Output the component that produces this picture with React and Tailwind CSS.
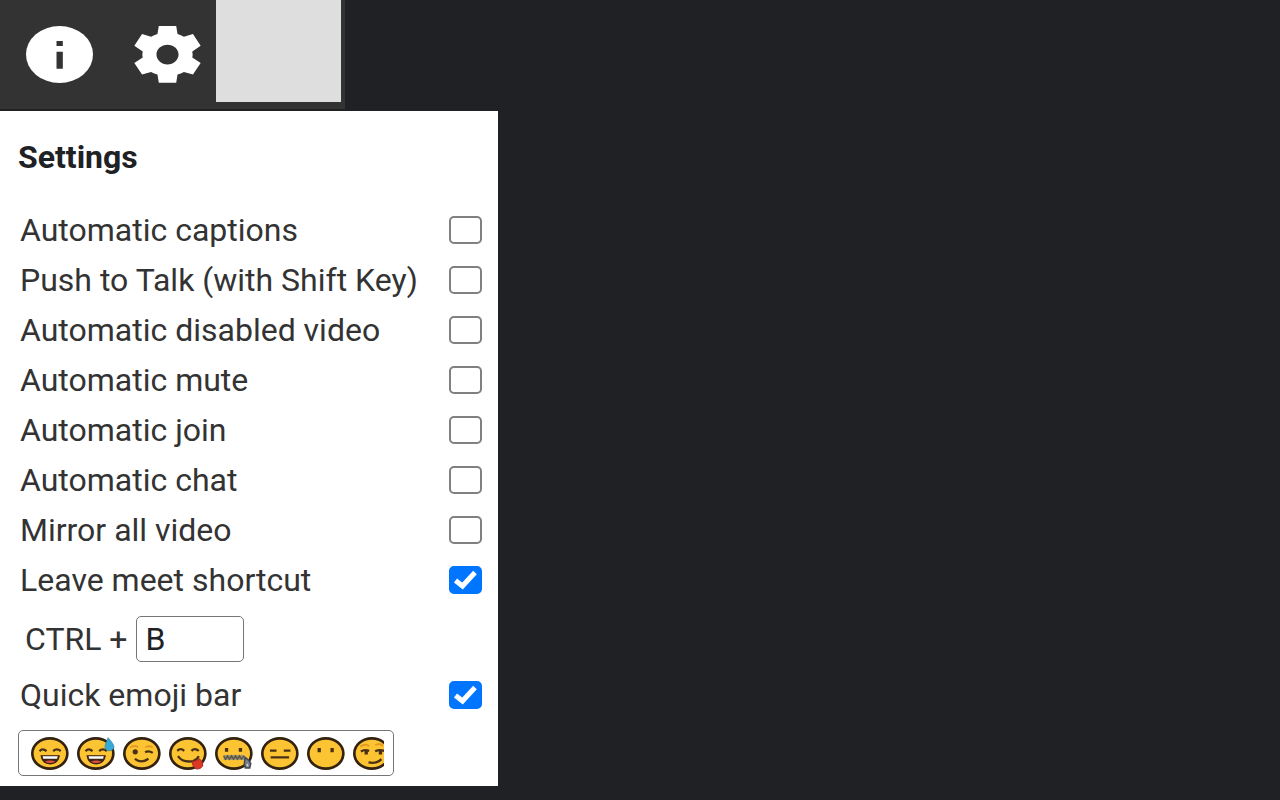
import React, { useState } from "react";

const OPTIONS = [
  ["captions", "Automatic captions", false],
  ["ptt", "Push to Talk (with Shift Key)", false],
  ["video", "Automatic disabled video", false],
  ["mute", "Automatic mute", false],
  ["join", "Automatic join", false],
  ["chat", "Automatic chat", false],
  ["mirror", "Mirror all video", false],
  ["leave", "Leave meet shortcut", true],
];

function InfoIcon() {
  return (
    <svg viewBox="0 0 202 172" preserveAspectRatio="none" className="h-[57px] w-[67px]" aria-hidden="true">
      <ellipse cx="101" cy="86" rx="101" ry="86" fill="#fff" />
      <path d="M92 45h19v15H92zM92 78h19v51H92z" fill="#333" />
    </svg>
  );
}

function GearIcon() {
  return (
    <svg viewBox="0 0 200 170" preserveAspectRatio="none" className="h-[57px] w-[67px]" aria-hidden="true">
      <path
        fill="#fff"
        fillRule="evenodd"
        d="M74 0H126L130 24Q140 27 149 32L176 24L199 59L174 76Q176 85 174 94L199 110L176 145L149 137Q140 142 130 145L126 169H74L70 145Q60 142 51 137L24 145L1 110L26 94Q24 85 26 76L1 59L24 24L51 32Q60 27 70 24ZM100 56C82 56 67 69 67 85S82 115 100 115S133 101 133 85S118 56 100 56Z"
      />
    </svg>
  );
}

function Face({ children }) {
  return (
    <svg
      viewBox="0 0 115 100"
      preserveAspectRatio="none"
      className="h-[33px] w-[38px] shrink-0"
      fill="none"
      stroke="#4a3014"
      strokeWidth="7"
      aria-hidden="true"
    >
      <ellipse cx="57" cy="50" rx="53" ry="46" fill="#fcc433" stroke="#33220f" strokeWidth="8" />
      {children}
    </svg>
  );
}

const Grin = () => (
  <>
    <path d="M26 43Q35 32 47 43M67 43Q78 32 90 43" />
    <path d="M31 57H85Q81 81 58 81T31 57Z" fill="#3c2415" stroke="#3c2415" strokeWidth="4" />
    <path d="M35 58H81L79 66H37Z" fill="#fff" stroke="none" />
    <path d="M42 75Q58 67 74 75Q58 83 42 75Z" fill="#e0503c" stroke="none" />
  </>
);

const FACES = [
  <Grin />,
  <>
    <Grin />
    <path d="M94 2Q113 22 112 32Q107 43 96 42Q83 39 85 26Z" fill="#36a9d4" stroke="#2b86a8" strokeWidth="2" />
  </>,
  <>
    <path d="M22 32Q32 23 46 31M68 31Q80 25 90 32" stroke="#e59a24" strokeWidth="6" />
    <ellipse cx="37" cy="45" rx="8" ry="8" fill="#4a3014" stroke="none" />
    <path d="M67 46Q78 40 90 48M36 66Q56 82 77 66" />
  </>,
  <>
    <path d="M25 42Q35 31 46 42M68 42Q78 31 90 42M27 58Q42 79 73 73Q85 69 90 58" />
    <path d="M69 76Q84 73 92 66Q105 76 102 88Q95 99 83 97Q72 91 69 76Z" fill="#dc3924" stroke="#ae2b20" strokeWidth="3" />
  </>,
  <>
    <path d="M35 33V45M77 33V45" strokeWidth="10" />
    <path d="M26 62H89" stroke="#9b9274" strokeWidth="15" />
    <path d="M26 57L32 67L38 57L44 67L50 57L56 67L62 57L68 67L74 57L80 67L88 57" stroke="#5c5643" strokeWidth="4" />
    <path d="M91 62L101 70L108 80L105 94L92 94L89 82Z" fill="#7d858e" stroke="#424c59" strokeWidth="5" />
    <path d="M96 82L100 88" stroke="#d4dbe1" strokeWidth="4" />
  </>,
  <path d="M27 41H47M69 41H89M29 62H85" />,
  <path d="M37 33V46M76 33V46" strokeWidth="10" />,
  <>
    <path d="M22 29Q38 18 49 28M67 25Q81 16 91 27" stroke="#e59a24" strokeWidth="6" />
    <path d="M24 44Q34 37 49 42M67 43Q80 37 95 42M47 77Q72 82 86 67" />
    <path d="M40 42V53M83 42V53" strokeWidth="10" />
  </>,
];

function Tick({ id, checked, onChange }) {
  return (
    <span className="grid shrink-0">
      <input
        id={id}
        type="checkbox"
        checked={checked}
        onChange={onChange}
        className="peer col-start-1 row-start-1 h-7 w-[33px] appearance-none rounded-[5px] border-2 border-[#808080] bg-white checked:border-[#0075ff] checked:bg-[#0075ff]"
      />
      <svg
        viewBox="0 0 33 28"
        className="pointer-events-none col-start-1 row-start-1 hidden h-7 w-[33px] peer-checked:block"
        fill="none"
        stroke="#fff"
        strokeWidth="5"
        aria-hidden="true"
      >
        <path d="M6.5 14.5L13.5 20L26 6.5" />
      </svg>
    </span>
  );
}

function OptionRow({ id, label, initial }) {
  const [checked, setChecked] = useState(initial);
  return (
    <div className="flex h-[50px] items-center justify-between pr-4 pl-5">
      <label htmlFor={id} className="whitespace-nowrap">{label}</label>
      <Tick id={id} checked={checked} onChange={(e) => setChecked(e.target.checked)} />
    </div>
  );
}

export default function App() {
  const [key, setKey] = useState("B");
  return (
    <div className="min-h-screen bg-[#202124] font-['Roboto',sans-serif] text-[32px] leading-9 text-[#333]">
      <nav className="flex h-[111px] w-fit items-start border-b-2 border-[#222] bg-[#333] pr-1">
        <button type="button" aria-label="Information" className="py-[26px] pr-[21px] pl-[26px]">
          <InfoIcon />
        </button>
        <button type="button" aria-label="Settings" className="py-[26px] pr-[15px] pl-5">
          <GearIcon />
        </button>
        <div className="h-[102px] w-[125px] bg-[#dedede]" />
      </nav>
      <main className="w-fit min-w-[498px] bg-white pb-[10px]">
        <h1 className="pt-7 pb-[30px] pl-[18px] font-bold text-[#202124]">Settings</h1>
        {OPTIONS.map(([id, label, initial]) => (
          <OptionRow key={id} id={id} label={label} initial={initial} />
        ))}
        <div className="flex items-center gap-2 pt-[11px] pb-2 pl-[25px]">
          <label htmlFor="shortcut">CTRL +</label>
          <input
            id="shortcut"
            type="text"
            value={key}
            onChange={(e) => setKey(e.target.value)}
            className="h-[46px] w-[108px] rounded-[5px] border border-[#767676] bg-white px-[9px] text-[#202124]"
          />
        </div>
        <OptionRow id="emoji" label="Quick emoji bar" initial={true} />
        <div className="ml-[18px] mt-[10px] grid w-[376px]">
          <input
            type="text"
            aria-label="Quick emoji bar contents"
            className="col-start-1 row-start-1 h-[46px] w-full rounded-[5px] border border-[#767676] bg-white px-3"
          />
          <div className="pointer-events-none col-start-1 row-start-1 mr-[10px] ml-[13px] flex items-center gap-2 overflow-hidden">
            {FACES.map((face, i) => (
              <Face key={i}>{face}</Face>
            ))}
          </div>
        </div>
      </main>
    </div>
  );
}
